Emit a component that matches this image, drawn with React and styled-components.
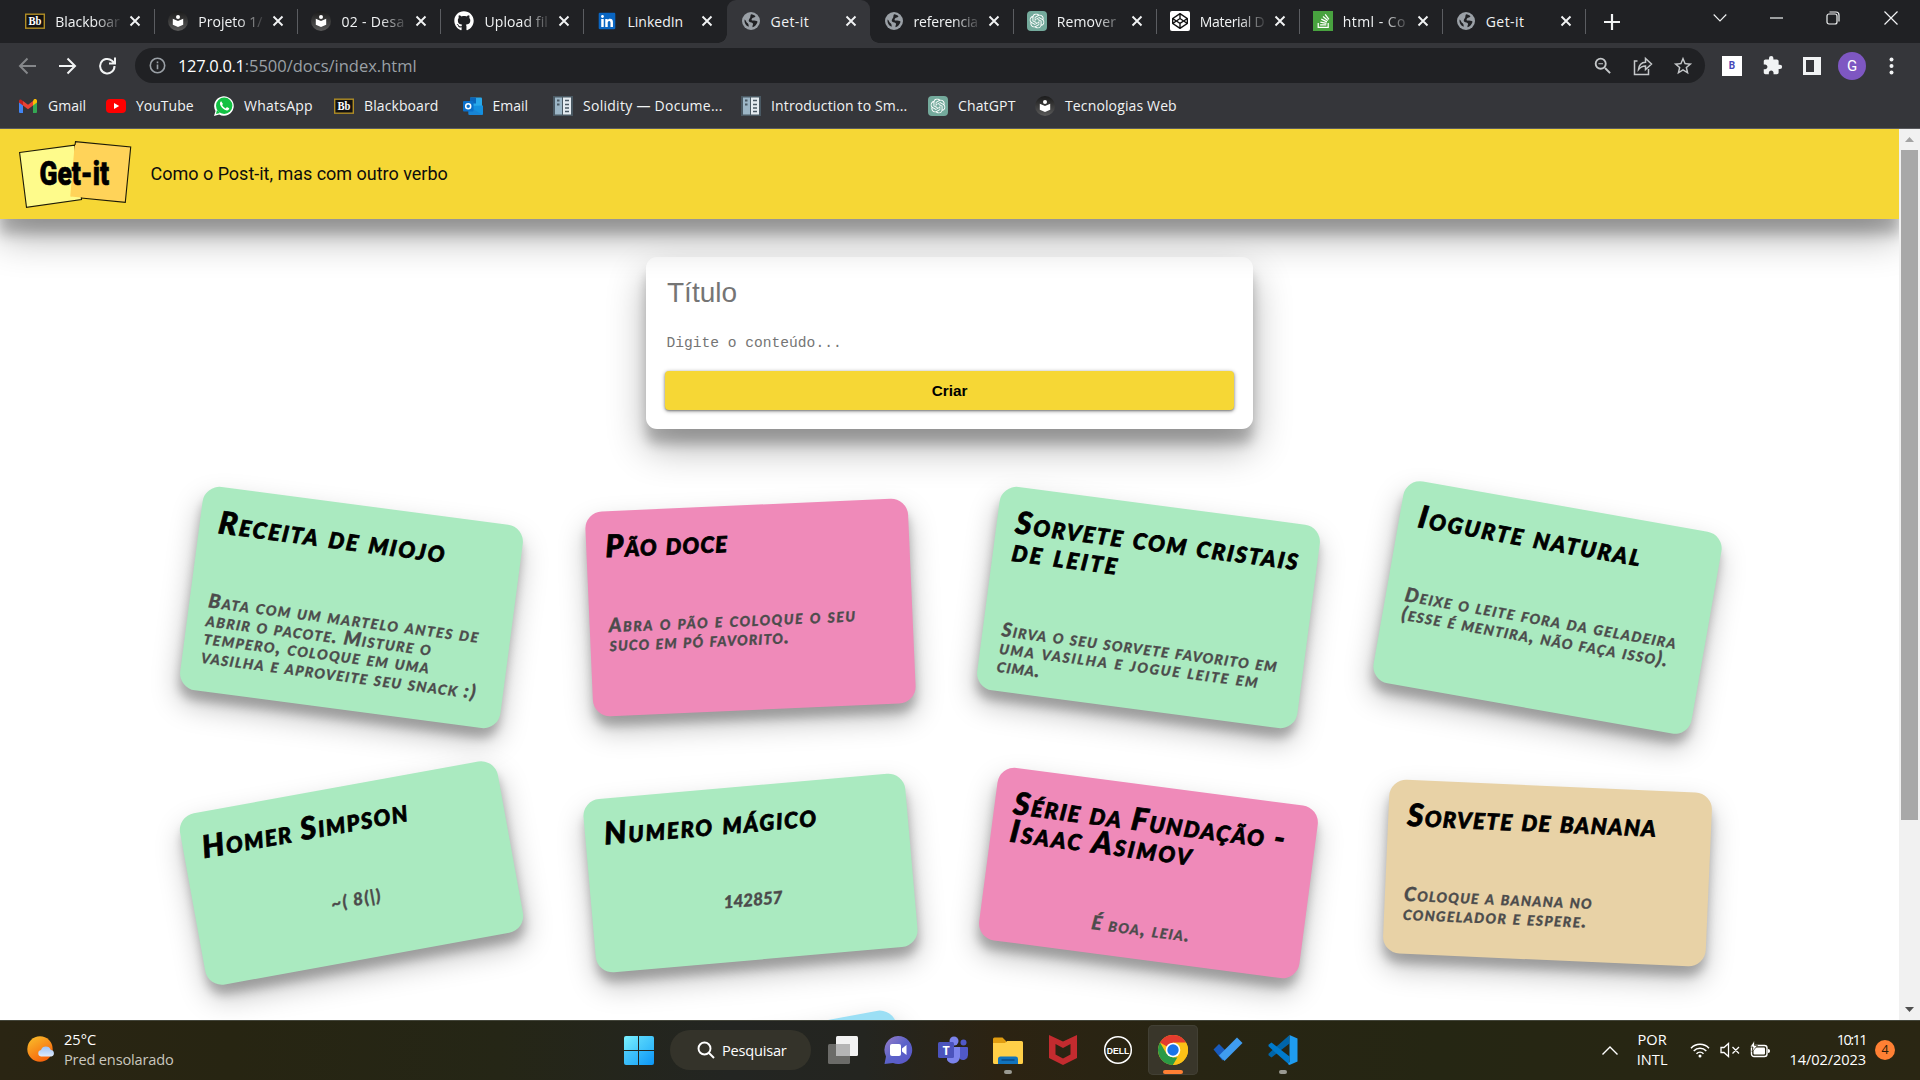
import React, { useLayoutEffect, useRef, useState } from "react";
import styled, { createGlobalStyle, css } from "styled-components";
import { FaGithub, FaLinkedin, FaStackOverflow, FaCodepen } from "react-icons/fa";
import { MdExtension, MdStarBorder, MdZoomOut } from "react-icons/md";
import { SiOpenai } from "react-icons/si";

const UI = `"Open Sans", "Noto Sans", sans-serif`;
const LIFT = "0 19px 38px rgba(0,0,0,.3), 0 15px 12px rgba(0,0,0,.22)";

const Global = createGlobalStyle`
  * { box-sizing: border-box; }
  body { margin: 0; overflow: hidden; background: #fff; }
  svg { display: block; flex: none; }
`;

/* ---------- text whose tracking is computed from a target width ---------- */
const FitSpan = styled.span`
  display: inline-block;
  white-space: nowrap;
  flex: none;
`;
function Fit({ w, children }) {
  const ref = useRef(null);
  const [track, setTrack] = useState(0);
  useLayoutEffect(() => {
    const el = ref.current;
    el.style.letterSpacing = "0px";
    const natural = el.offsetWidth;
    const step = (w - natural) / Math.max(1, String(children).length);
    el.style.letterSpacing = `${step}px`;
    setTrack(step);
  }, [w, children]);
  return (
    <FitSpan ref={ref} style={{ letterSpacing: `${track}px` }}>
      {children}
    </FitSpan>
  );
}

const Screen = styled.div`
  width: 1920px;
  height: 1080px;
  display: flex;
  flex-direction: column;
  overflow: hidden;
  font-family: ${UI};
`;

/* ---------- tab strip ---------- */
const TabStrip = styled.div`
  height: 43px;
  flex: none;
  background: #202124;
  display: flex;
  padding-left: 11.8px;
`;
const Tab = styled.div`
  width: 143.05px;
  height: 43px;
  flex: none;
  display: flex;
  align-items: center;
  padding: 0 9px 1px 13.5px;
  position: relative;
  color: #f1f3f4;
  font-size: 14px;
  ${(p) =>
    p.$active &&
    css`
      background: #35363a;
      border-radius: 9px 9px 0 0;
      &::before,
      &::after {
        content: "";
        position: absolute;
        bottom: 0;
        width: 9px;
        height: 9px;
      }
      &::before {
        left: -9px;
        background: radial-gradient(circle at 0 0, transparent 8.5px, #35363a 9px);
      }
      &::after {
        right: -9px;
        background: radial-gradient(circle at 100% 0, transparent 8.5px, #35363a 9px);
      }
    `}
`;
const TabLabel = styled.div`
  width: 66px;
  margin-left: 10px;
  white-space: nowrap;
  ${(p) => p.$fade && css`mask-image: linear-gradient(90deg, #000 60%, rgba(0, 0, 0, 0.15) 97%);`}
`;
const CloseSlot = styled.div`
  margin-left: 8px;
`;
const TabDivider = styled.i`
  width: 1px;
  height: 25px;
  flex: none;
  margin: 9px -0.5px 0;
  background: ${(p) => (p.$show ? "#5b5d61" : "transparent")};
`;
const NewTab = styled.div`
  margin: 14px 0 0 18.5px;
`;
const WindowControls = styled.div`
  margin-left: auto;
  display: flex;
  width: 214px;
  height: 36px;
  align-items: center;
`;
const ControlSlot = styled.div`
  width: ${(p) => p.$w}px;
  padding-left: ${(p) => p.$pad || 0}px;
  flex: none;
  display: flex;
  justify-content: center;
`;

/* ---------- toolbar ---------- */
const Toolbar = styled.div`
  height: 45px;
  flex: none;
  background: #35363a;
  display: flex;
  align-items: center;
  padding-left: 17px;
`;
const NavButtons = styled.div`
  display: flex;
  gap: 19px;
  width: 118px;
`;
const Omnibox = styled.div`
  width: 1570px;
  height: 35px;
  border-radius: 18px;
  background: #202124;
  display: flex;
  align-items: center;
  padding: 0 11px 0 14px;
  color: #9aa0a6;
  font-size: 16.5px;
`;
const Host = styled.span`
  color: #fff;
  margin-left: 12px;
`;
const OmniActions = styled.div`
  margin-left: auto;
  display: flex;
  gap: 19px;
  align-items: center;
`;
const Extensions = styled.div`
  display: flex;
  align-items: center;
  flex: 1;
  padding-left: 17px;
`;
const BadgeB = styled.div`
  width: 20px;
  height: 20px;
  background: #fff;
  color: #4747b8;
  font: 700 10px/20px Roboto, sans-serif;
  text-align: center;
  margin-right: 19.5px;
`;
const PanelIcon = styled.div`
  width: 18px;
  height: 18px;
  border: 3px solid #f1f3f4;
  border-right-width: 7px;
  margin: 0 17.5px 0 20px;
`;
const Avatar = styled.div`
  width: 28px;
  height: 28px;
  border-radius: 50%;
  background: #7e57c2;
  color: #fff;
  font: 400 15px/28px Roboto, sans-serif;
  text-align: center;
  margin-right: 23px;
`;

/* ---------- bookmarks ---------- */
const Bookmarks = styled.div`
  height: 41px;
  flex: none;
  background: #35363a;
  border-bottom: 1px solid #5a5b5f;
  display: flex;
  align-items: center;
  padding: 0 0 5px 18px;
  color: #f1f3f4;
  font-size: 14px;
`;
const Bookmark = styled.div`
  width: ${(p) => p.$w}px;
  flex: none;
  display: flex;
  align-items: center;
  gap: 10px;
`;

/* ---------- viewport ---------- */
const Viewport = styled.div`
  height: 891px;
  flex: none;
  display: flex;
  overflow: hidden;
`;
const Page = styled.main`
  width: 1899px;
  flex: none;
  height: 891px;
  overflow: hidden;
  background: #fff;
  display: flex;
  flex-direction: column;
  align-items: center;
`;
const AppBar = styled.header`
  width: 100%;
  height: 90px;
  flex: none;
  background: #f6d735;
  box-shadow: ${LIFT};
  display: flex;
  align-items: center;
  padding: 0 0 0 19px;
  gap: 18.5px;
  position: relative;
  z-index: 2;
  font: 400 18px/24px Roboto, sans-serif;
  color: #0d0d0d;
`;
const Form = styled.section`
  width: 607px;
  height: 172px;
  flex: none;
  margin-top: 38px;
  border-radius: 11px;
  background: #fff;
  box-shadow: ${LIFT};
  padding: 17px 19px 19px;
  display: flex;
  flex-direction: column;
  color: #757575;
`;
const TitleField = styled.div`
  font: 400 28px/38px "Liberation Sans", Arial, sans-serif;
  padding-left: 2px;
`;
const BodyField = styled.div`
  font: 400 14.6px/20px "Liberation Mono", monospace;
  padding-left: 1.5px;
  margin-top: 21px;
`;
const Create = styled.button`
  margin-top: auto;
  height: 39px;
  border: 0;
  border-radius: 4px;
  background: #f6d735;
  box-shadow: 0 1px 4px rgba(0, 0, 0, 0.4), 0 1px 2px rgba(0, 0, 0, 0.3);
  font: 700 15.3px "Liberation Sans", Arial, sans-serif;
  color: #000;
`;
const Board = styled.section`
  display: grid;
  grid-template-columns: repeat(4, 323px);
  grid-auto-rows: max-content;
  gap: 76px 75.7px;
  margin-top: 76px;
`;
const TONES = { green: "#aaeac0", pink: "#ef8ab9", sand: "#e8d2a6", blue: "#9bdff5" };
const Note = styled.article`
  height: ${(p) => p.$h}px;
  border-radius: 17px;
  background: ${(p) => TONES[p.$tone]};
  box-shadow: 0 14px 28px rgba(0, 0, 0, 0.25), 0 10px 10px rgba(0, 0, 0, 0.22);
  transform: rotate(${(p) => p.$tilt}deg);
  grid-column: ${(p) => p.$col || "auto"};
  padding: 20px 19px 0;
  font-family: Lato, "Open Sans", sans-serif;
  font-variant: small-caps;
  font-style: italic;
  display: flex;
  flex-direction: column;
  gap: 57px;
`;
const NoteTitle = styled.h3`
  margin: 0;
  font-size: 31px;
  font-weight: 900;
  line-height: 28.3px;
  color: #000;
  -webkit-text-stroke: 0.8px #000;
  display: flex;
  flex-direction: column;
  align-items: flex-start;
`;
const NoteBody = styled.div`
  font-size: 19.5px;
  font-weight: 900;
  line-height: 18.4px;
  color: #4c4c4c;
  -webkit-text-stroke: 0.3px #4c4c4c;
  display: flex;
  flex-direction: column;
  align-items: ${(p) => (p.$center ? "center" : "flex-start")};
`;
const NoteDigits = styled.span`
  font-size: 17.5px;
`;

const Scrollbar = styled.div`
  width: 21px;
  flex: none;
  background: #f1f1f1;
  display: flex;
  flex-direction: column;
  align-items: center;
`;
const ScrollArrow = styled.div`
  height: 21px;
  width: 21px;
  display: flex;
  align-items: center;
  justify-content: center;
`;
const Thumb = styled.div`
  width: 17px;
  height: 670px;
  background: #a8a8a8;
  margin-bottom: auto;
`;

/* ---------- taskbar ---------- */
const Taskbar = styled.footer`
  height: 60px;
  flex: none;
  border-top: 1px solid #43453a;
  background: linear-gradient(90deg, #2a2513 0%, #272512 12%, #252616 26%, #232522 38%, #242520 45%, #2c2312 52%, #282513 62%, #252613 75%, #2a2613 100%);
  display: flex;
  align-items: center;
  padding-bottom: 1px;
  color: #fff;
  font-size: 14.6px;
`;
const Weather = styled.div`
  width: 623.5px;
  display: flex;
  align-items: center;
  padding-left: 27px;
  gap: 8px;
`;
const TwoLine = styled.div`
  display: flex;
  flex-direction: column;
  align-items: ${(p) => p.$align || "flex-start"};
  line-height: 20px;
  padding-bottom: 2px;
`;
const Dim = styled.div`
  color: #c9c7be;
`;
const Search = styled.div`
  width: 141px;
  height: 40px;
  border-radius: 20px;
  background: #34332a;
  display: flex;
  align-items: center;
  padding-left: 27px;
  gap: 7px;
  margin: 0 4.5px 0 16.5px;
`;
const TaskButton = styled.div`
  width: 50px;
  height: 50px;
  margin: 0 2.5px;
  flex: none;
  border-radius: 5px;
  position: relative;
  display: flex;
  align-items: center;
  justify-content: center;
  ${(p) => p.$active && css`background: #39362a; box-shadow: inset 0 0 0 1px #424034;`}
  &::after {
    content: "";
    position: absolute;
    bottom: 1px;
    width: ${(p) => (p.$active ? 20 : 8)}px;
    height: 4px;
    border-radius: 2px;
    background: ${(p) => (p.$active ? "#ff8034" : p.$running ? "#9a9a92" : "transparent")};
  }
`;
const Start = styled.div`
  width: 30px;
  height: 29px;
  display: grid;
  grid-template-columns: 1fr 1fr;
  gap: 1px;
  flex: none;
  border-radius: 2px;
  overflow: hidden;
  & i:nth-child(1) { background: linear-gradient(135deg, #79f0ff, #4bcdfb); }
  & i:nth-child(2) { background: linear-gradient(135deg, #58d6fb, #30b8fa); }
  & i:nth-child(3) { background: linear-gradient(135deg, #4ccbfb, #28aff9); }
  & i:nth-child(4) { background: linear-gradient(135deg, #33b9fa, #0d96f6); }
`;
const Tray = styled.div`
  margin-left: auto;
  display: flex;
  align-items: center;
  padding-right: 25px;
`;
const TrayGap = styled.i`
  width: 18px;
`;
const TrayIcons = styled.div`
  display: flex;
  align-items: center;
  gap: 10px;
  margin: 0 20px 0 22px;
`;
const Count = styled.div`
  width: 20px;
  height: 20px;
  border-radius: 50%;
  background: #ff8034;
  color: #2a1c08;
  font-size: 12.5px;
  line-height: 20px;
  text-align: center;
  margin-left: 9px;
`;

/* ---------- icons ---------- */
const BbIcon = () => (
  <svg width="20" height="20" viewBox="0 0 20 20">
    <rect x=".7" y="3.2" width="18.6" height="14" fill="#111" stroke="#b08d25" strokeWidth="1.4" />
    <text x="3.500" y="14.200" fontSize="12" fill="#fff" fontFamily="Liberation Serif, serif" fontWeight="700" textLength="13" lengthAdjust="spacingAndGlyphs">Bb</text>
  </svg>
);
const ReaderIcon = () => (
  <svg width="20" height="20" viewBox="0 0 20 20">
    <defs>
      <linearGradient id="rd" x1="0" x2="0" y1="0" y2="1">
        <stop offset="0" stopColor="#1b1b1b" />
        <stop offset="1" stopColor="#5a5a5a" />
      </linearGradient>
    </defs>
    <circle cx="10" cy="10" r="10" fill="url(#rd)" />
    <circle cx="10" cy="6" r="2" fill="#fff" />
    <path d="M4.8 7.800 10 10l5.200-2.200v6L10 16l-5.200-2.200z" fill="#fff" />
  </svg>
);
const GlobeIcon = () => (
  <svg width="20" height="20" viewBox="0 0 20 20">
    <circle cx="10" cy="10" r="9" fill="#9aa0a6" />
    <path d="M10 3.200c2 .2 3.500 1 4.500 2-.4 1.600-2.500 1-3.500 2.200-.8 1-.4 2 .8 2.200 1.700.3 4-.3 4.800 1.200-.8 2.600-2.600 4.800-5 5.500-.6-1.300.6-2.200.4-3.500-.3-1.500-2.500-1-3.700-2C7.200 9.900 8 8.300 8.900 7c.8-1.200.2-2.500 1.100-3.800zM3.600 8.500c1.600 1 1.300 2.500 2.700 3.400.9.7 1.500 1.300 1.400 3.900C5 14.800 3 12 3.600 8.500z" fill="#202124" />
  </svg>
);
const LinkedIn = () => (
  <svg width="20" height="20" viewBox="0 0 20 20">
    <rect x="3" y="3" width="14" height="14" fill="#fff" />
    <FaLinkedin x="0.500" y="0.500" size={19} color="#0a66c2" />
  </svg>
);
const GptIcon = () => (
  <svg width="20" height="20" viewBox="0 0 20 20">
    <rect width="20" height="20" rx="4" fill="#74aa9c" />
    <SiOpenai x="2.500" y="2.500" size={15} color="#fff" />
  </svg>
);
const CodepenIcon = () => (
  <svg width="20" height="20" viewBox="0 0 20 20">
    <rect width="20" height="20" rx="2" fill="#fff" />
    <FaCodepen x="2" y="2" size={16} color="#111" />
  </svg>
);
const StackIcon = () => (
  <svg width="20" height="20" viewBox="0 0 20 20">
    <rect width="20" height="20" fill="#48a23f" />
    <FaStackOverflow x="2.500" y="2" size={16} color="#fff" />
  </svg>
);
const CloseIcon = () => (
  <svg width="12" height="12" viewBox="0 0 12 12">
    <path d="M1.500 1.500l9 9M10.500 1.500l-9 9" stroke="#f1f3f4" strokeWidth="1.900" />
  </svg>
);
const GmailIcon = () => (
  <svg width="20" height="20" viewBox="0 0 20 20">
    <path d="M1 5.500v10.500a1 1 0 0 0 1 1h3V9z" fill="#4285f4" />
    <path d="M19 5.500v10.500a1 1 0 0 1-1 1h-3V9z" fill="#34a853" />
    <path d="M15 5v4.500l4-3V5c0-2-2-2.500-3.200-1.500z" fill="#fbbc04" />
    <path d="M5 9.500V5l5 3.800L15 5v4.500l-5 3.800z" fill="#ea4335" />
    <path d="M1 5v1.500l4 3V5l-.8-.6C3 3 1 3.400 1 5z" fill="#c5221f" />
  </svg>
);
const YouTubeIcon = () => (
  <svg width="20" height="20" viewBox="0 0 20 20">
    <rect y="3" width="20" height="14" rx="4" fill="#f00" />
    <path d="M8 7v6l5.200-3z" fill="#fff" />
  </svg>
);
const WhatsIcon = () => (
  <svg width="20" height="20" viewBox="0 0 20 20">
    <path d="M0 20l1.500-5A9.800 9.800 0 1 1 5.200 18.600z" fill="#fff" />
    <circle cx="10.200" cy="9.800" r="8.200" fill="#12c143" />
    <path d="M2 18l1-4 3 3z" fill="#12c143" />
    <path d="M7.200 5.300c-1.500.8-1.700 2.700-.4 4.800 1.500 2.500 4.300 4.600 6.500 4.300 1.300-.2 2-1.200 1.900-2.100l-2.300-1.200-1.200 1.300c-1.600-.6-2.900-1.900-3.600-3.300l.9-1.100z" fill="#fff" />
  </svg>
);
const OutlookIcon = () => (
  <svg width="20" height="20" viewBox="0 0 20 20">
    <rect x="7" y="1.500" width="12" height="11" rx="1" fill="#28a8ea" />
    <rect x="7" y="1.500" width="6" height="6" fill="#0a64b8" />
    <path d="M5.500 10 20 9.500V18a1 1 0 0 1-1 1H6.500a1 1 0 0 1-1-1z" fill="#1490df" />
    <path d="M5.500 10l14 9H6.500a1 1 0 0 1-1-1z" fill="#1a7fd0" opacity=".7" />
    <rect y="5" width="10.500" height="10.500" rx="1" fill="#0a6fc9" />
    <circle cx="5.200" cy="10.200" r="2.500" fill="none" stroke="#fff" strokeWidth="1.500" />
  </svg>
);
const DocsIcon = () => (
  <svg width="20" height="20" viewBox="0 0 20 20">
    <rect width="20" height="20" fill="#4a5963" />
    <rect x="2" y="1.500" width="7" height="17" fill="#9cb6c6" />
    <path d="M4 4.500h2.500M4 8.500h2.500" stroke="#4a5963" strokeWidth="2" />
    <rect x="10" y="1.500" width="8" height="17" fill="#e4ebf0" />
    <path d="M12 4.500h4M12 8.500h4M12 12h4M12 15.500h4" stroke="#4a5963" strokeWidth="1.600" />
  </svg>
);
const Line = ({ w = 20, h = 20, d, color = "#f1f3f4", sw = 2 }) => (
  <svg width={w} height={h} viewBox={`0 0 ${w} ${h}`} fill="none" stroke={color} strokeWidth={sw}>
    <path d={d} />
  </svg>
);

const Logo = () => (
  <svg width="113" height="68" viewBox="0 0 113 68">
    <path d="M.6 12.500 55.500 5.200 62.500 59.500 7.500 67.300z" fill="#fefb8b" stroke="#1c1a08" strokeWidth="1.100" />
    <path d="M56.500 1.600 111.700 7 106.300 62.300 52 56.500z" fill="#ffd359" />
    <path d="M56 5 56.500 1.600 111.700 7 106.300 62.300 62 58" fill="none" stroke="#1c1a08" strokeWidth="1.100" />
    <path d="M56.300 6 52 56.500" stroke="#ffd359" strokeWidth="1.500" />
    <text x="20.500" y="44.500" fontSize="34" textLength="69.500" lengthAdjust="spacingAndGlyphs" fontFamily="Roboto, sans-serif" fontWeight="900" stroke="#000" strokeWidth=".7">Get-it</text>
  </svg>
);

const SunIcon = () => (
  <svg width="29" height="28" viewBox="0 0 29 28">
    <defs>
      <linearGradient id="sun" x1="0" x2=".6" y1="0" y2="1">
        <stop offset="0" stopColor="#f9c22c" />
        <stop offset="1" stopColor="#f7630c" />
      </linearGradient>
      <linearGradient id="cl" x1="0" x2="0" y1="0" y2="1">
        <stop offset="0" stopColor="#9dc3f7" />
        <stop offset="1" stopColor="#dfeafc" />
      </linearGradient>
    </defs>
    <circle cx="13" cy="13" r="12.700" fill="url(#sun)" />
    <path d="M14 20.500a3.300 3.300 0 0 1 0-6.500 5.200 5.200 0 0 1 9.800 0 3.300 3.300 0 0 1 .6 6.500z" fill="url(#cl)" />
  </svg>
);
const TaskViewIcon = () => (
  <svg width="30" height="30" viewBox="0 0 30 30">
    <rect x="8" y="1" width="22" height="20" rx="1.500" fill="#f2f2f2" />
    <rect x="0" y="9" width="22" height="20" rx="1.500" fill="#6b6b68" />
    <rect x="8" y="9" width="14" height="12" fill="#b5b5b5" />
  </svg>
);
const ChatIcon = () => (
  <svg width="30" height="30" viewBox="0 0 30 30">
    <defs>
      <linearGradient id="ch" x1="0" x2="1" y1="0" y2="1">
        <stop offset="0" stopColor="#9a7fc8" />
        <stop offset=".5" stopColor="#5b62c9" />
        <stop offset="1" stopColor="#5a55c8" />
      </linearGradient>
    </defs>
    <path d="M15 1a14 14 0 1 1-5 27l-8.500 1 1.500-7.500A14 14 0 0 1 15 1z" fill="url(#ch)" />
    <rect x="7" y="9" width="11" height="12" rx="2" fill="#fff" />
    <path d="M19 13.500 23.500 10v10L19 16.500z" fill="#fff" />
  </svg>
);
const TeamsIcon = () => (
  <svg width="30" height="30" viewBox="0 0 30 30">
    <circle cx="16" cy="6" r="4.500" fill="#7b83eb" />
    <circle cx="25.500" cy="7.500" r="3" fill="#5059c9" />
    <path d="M20 12h9a1 1 0 0 1 1 1v7a5 5 0 0 1-8 4z" fill="#5059c9" />
    <path d="M9 12h13v10a7 7 0 0 1-13 3z" fill="#7b83eb" />
    <rect x="0" y="7" width="16" height="16" rx="1.500" fill="#4b53bc" />
    <text x="8" y="19.500" fontSize="12.500" fontWeight="700" fill="#fff" textAnchor="middle" fontFamily="Open Sans, sans-serif">T</text>
  </svg>
);
const FolderIcon = () => (
  <svg width="30" height="30" viewBox="0 0 30 30">
    <path d="M0 4a1.500 1.500 0 0 1 1.500-1.500h8l3.500 3.500v5H0z" fill="#e09c10" />
    <path d="M0 8h12l2-2h14.500A1.500 1.500 0 0 1 30 7.500v20a1.500 1.500 0 0 1-1.500 1.500h-27A1.500 1.500 0 0 1 0 27.500z" fill="#ffcf48" />
    <path d="M5 29v-5a2.500 2.500 0 0 1 2.500-2.500h15A2.500 2.500 0 0 1 25 24v5z" fill="#1173bd" />
    <path d="M8.500 25h13" stroke="#0b4a86" strokeWidth="1.500" />
  </svg>
);
const McAfeeIcon = () => (
  <svg width="28" height="30" viewBox="0 0 28 30">
    <path d="M0 0l14 6.500L28 0v23l-14 7-14-7zM6.500 9v10.500l7.500 4 7.500-4V9L14 13z" fill="#c32b2f" fillRule="evenodd" />
  </svg>
);
const DellIcon = () => (
  <svg width="30" height="30" viewBox="0 0 30 30">
    <circle cx="15" cy="15" r="13.300" fill="none" stroke="#fff" strokeWidth="1.500" />
    <text x="3.800" y="18.500" fontSize="9.500" fontWeight="700" textLength="22.500" lengthAdjust="spacingAndGlyphs" fill="#fff" fontFamily="Liberation Sans, sans-serif">DELL</text>
  </svg>
);
const ChromeIcon = () => (
  <svg width="30" height="30" viewBox="0 0 30 30">
    <circle cx="15" cy="15" r="15" fill="#fbc116" />
    <path d="M15 15 2 7.500A15 15 0 0 1 28 7.500H15z" fill="#e33b2e" />
    <path d="M2 7.500 8.500 18.700 15 22.500h6.500L14.900 30A15 15 0 0 1 2 7.500z" fill="#2b9a45" />
    <path d="M14.900 30 21.500 18.700 22 11 28 7.500A15 15 0 0 1 14.900 30z" fill="#fbc116" />
    <circle cx="15" cy="15" r="7.300" fill="#fff" />
    <circle cx="15" cy="15" r="5.700" fill="#1a73e8" />
  </svg>
);
const TodoIcon = () => (
  <svg width="30" height="30" viewBox="0 0 30 30">
    <path d="M.5 14.500 6 9l9 9-5.500 7.500z" fill="#185abd" />
    <path d="M6 20.500 24 2.500l5.500 5.500L11.500 26z" fill="#3f9cf0" />
  </svg>
);
const CodeIcon = () => (
  <svg width="30" height="30" viewBox="0 0 30 30">
    <path d="M21.500 8.500 3.500 22.500.5 20.200v-1.500L21 .5z" fill="#0065a9" />
    <path d="M21.500 21.500 3.500 7.500.5 9.800v1.500L21 29.500z" fill="#007acc" />
    <path d="M21.500 0 29.500 3.500v23L21.500 30l-1.500-1 1.500-2z" fill="#1f9cf0" />
  </svg>
);
const GithubIcon = () => <FaGithub size={20} color="#fff" />;

const TABS = [
  [BbIcon, "Blackboar", true, 64.5],
  [ReaderIcon, "Projeto 1/", true, 64],
  [ReaderIcon, "02 - Desa", true, 63],
  [GithubIcon, "Upload fil", true, 64],
  [LinkedIn, "LinkedIn", false, 56],
  [GlobeIcon, "Get-it", false, 38.5],
  [GlobeIcon, "referencia", true, 64],
  [GptIcon, "Remover", true, 59],
  [CodepenIcon, "Material D", true, 65],
  [StackIcon, "html - Co", true, 63],
  [GlobeIcon, "Get-it", false, 38.5],
];

const MARKS = [
  [GmailIcon, "Gmail", 38, 88],
  [YouTubeIcon, "YouTube", 58, 108],
  [WhatsIcon, "WhatsApp", 69, 120],
  [BbIcon, "Blackboard", 74, 128.5],
  [OutlookIcon, "Email", 36, 90.5],
  [DocsIcon, "Solidity — Docume...", 139.5, 188],
  [DocsIcon, "Introduction to Sm...", 136, 187],
  [GptIcon, "ChatGPT", 58, 107],
  [ReaderIcon, "Tecnologias Web", 112, 150],
];

const NOTES = [
  { tone: "green", tilt: 7.5, h: 205, title: [["Receita de miojo", 230]], body: [["Bata com um martelo antes de", 273], ["abrir o pacote. Misture o", 228], ["tempero, coloque em uma", 229], ["vasilha e aproveite seu snack :)", 278]] },
  { tone: "pink", tilt: -2.5, h: 205, title: [["Pão doce", 123]], body: [["Abra o pão e coloque o seu", 248], ["suco em pó favorito.", 180.5]] },
  { tone: "green", tilt: 7.5, h: 205, title: [["Sorvete com cristais", 286], ["de leite", 108.5]], body: [["Sirva o seu sorvete favorito em", 278.5], ["uma vasilha e jogue leite em", 262], ["cima.", 44]] },
  { tone: "green", tilt: 10, h: 205, title: [["Iogurte natural", 227]], body: [["Deixe o leite fora da geladeira", 276], ["(esse é mentira, não faça isso).", 271]] },
  { tone: "green", tilt: -10.3, h: 173.5, center: true, digits: true, title: [["Homer Simpson", 209.5]], body: [["~( 8(|)", 51]] },
  { tone: "green", tilt: -5, h: 173.5, center: true, digits: true, title: [["Numero mágico", 214.5]], body: [["142857", 59]] },
  { tone: "pink", tilt: 7.5, h: 173.5, center: true, title: [["Série da Fundação -", 275], ["Isaac Asimov", 185.5]], body: [["É boa, leia.", 100]] },
  { tone: "sand", tilt: 2.5, h: 173.5, title: [["Sorvete de banana", 250.5]], body: [["Coloque a banana no", 189], ["congelador e espere.", 184.5]] },
  { tone: "blue", tilt: -10.6, h: 173.5, col: 2, title: [], body: [] },
];

const Lines = ({ items }) => items.map(([t, w]) => <Fit key={t} w={w}>{t}</Fit>);

export default function App() {
  return (
    <Screen>
      <Global />
      <TabStrip>
        {TABS.map(([Icon, label, fade, w], i) => (
          <React.Fragment key={i}>
            <Tab $active={i === 5}>
              <Icon />
              <TabLabel $fade={fade}><Fit w={w}>{label}</Fit></TabLabel>
              <CloseSlot><CloseIcon /></CloseSlot>
            </Tab>
            <TabDivider $show={i !== 4 && i !== 5} />
          </React.Fragment>
        ))}
        <NewTab><Line w={16} h={16} d="M8 0v16M0 8h16" sw={2.2} /></NewTab>
        <WindowControls>
          <ControlSlot $w={27}><Line w={14} h={14} d="M.7 3.500 7 10l6.300-6.500" sw={1.1} /></ControlSlot>
          <ControlSlot $w={86}><Line w={13} h={2} d="M0 1h13" sw={1.2} /></ControlSlot>
          <ControlSlot $w={28}><Line w={14} h={14} d="M1 5a2 2 0 0 1 2-2h6a2 2 0 0 1 2 2v6a2 2 0 0 1-2 2h-6a2 2 0 0 1-2-2zM3.500 1h6.500a3 3 0 0 1 3 3v6.500" sw={1.2} /></ControlSlot>
          <ControlSlot $w={73} $pad={15}><Line w={14} h={14} d="M.5.5l13 13M13.500.5l-13 13" sw={1.2} /></ControlSlot>
        </WindowControls>
      </TabStrip>

      <Toolbar>
        <NavButtons>
          <Line w={21} d="M19 10H3M10.500 2.500 3 10l7.500 7.500" color="#85878a" />
          <Line w={21} d="M2 10h16M10.500 2.500 18 10l-7.500 7.500" />
          <Line w={21} d="M17.500 10A7.200 7.200 0 1 1 15 4.700L17.500 7M18 1.500v6h-6" />
        </NavButtons>
        <Omnibox>
          <svg width="17" height="17" viewBox="0 0 17 17" fill="none" stroke="#9aa0a6" strokeWidth="1.600">
            <circle cx="8.500" cy="8.500" r="7.200" />
            <path d="M8.500 7.500v4.800M8.500 4.500v1.700" />
          </svg>
          <Host><Fit w={67}>127.0.0.1</Fit></Host>
          <Fit w={172}>:5500/docs/index.html</Fit>
          <OmniActions>
            <MdZoomOut size={22} color="#c4c7c9" />
            <Line w={20} d="M4.500 5H1.500v13.500h14V13M5.500 13.500c.5-4.500 3-7 7-7.200V2.500L18.500 8l-6 5.500V10c-3 0-5 1-7 3.500z" color="#c4c7c9" sw={1.5} />
            <MdStarBorder size={22} color="#c4c7c9" />
          </OmniActions>
        </Omnibox>
        <Extensions>
          <BadgeB>B</BadgeB>
          <MdExtension size={21} color="#f1f3f4" />
          <PanelIcon />
          <Avatar>G</Avatar>
          <svg width="5" height="18" viewBox="0 0 5 18" fill="#f1f3f4">
            <circle cx="2.500" cy="2.500" r="2" /><circle cx="2.500" cy="9" r="2" /><circle cx="2.500" cy="15.500" r="2" />
          </svg>
        </Extensions>
      </Toolbar>

      <Bookmarks>
        {MARKS.map(([Icon, label, w, slot], i) => (
          <Bookmark key={i} $w={slot}>
            <Icon />
            <Fit w={w}>{label}</Fit>
          </Bookmark>
        ))}
      </Bookmarks>

      <Viewport>
        <Page>
          <AppBar>
            <Logo />
            <Fit w={297.5}>Como o Post-it, mas com outro verbo</Fit>
          </AppBar>
          <Form>
            <TitleField>Título</TitleField>
            <BodyField>Digite o conteúdo...</BodyField>
            <Create>Criar</Create>
          </Form>
          <Board>
            {NOTES.map((n, i) => (
              <Note key={i} $tone={n.tone} $tilt={n.tilt} $h={n.h} $col={n.col}>
                <NoteTitle><Lines items={n.title} /></NoteTitle>
                <NoteBody $center={n.center}>
                  {n.digits ? <NoteDigits><Lines items={n.body} /></NoteDigits> : <Lines items={n.body} />}
                </NoteBody>
              </Note>
            ))}
          </Board>
        </Page>
        <Scrollbar>
          <ScrollArrow>
            <svg width="9" height="5" viewBox="0 0 9 5"><path d="M0 5 4.500 0 9 5z" fill="#a3a3a3" /></svg>
          </ScrollArrow>
          <Thumb />
          <ScrollArrow>
            <svg width="9" height="5" viewBox="0 0 9 5"><path d="M0 0 4.500 5 9 0z" fill="#505050" /></svg>
          </ScrollArrow>
        </Scrollbar>
      </Viewport>

      <Taskbar>
        <Weather>
          <SunIcon />
          <TwoLine>
            <Fit w={32}>25°C</Fit>
            <Dim><Fit w={109.5}>Pred ensolarado</Fit></Dim>
          </TwoLine>
        </Weather>
        <Start><i /><i /><i /><i /></Start>
        <Search>
          <svg width="18" height="18" viewBox="0 0 18 18" fill="none" stroke="#fff" strokeWidth="1.900">
            <circle cx="7.500" cy="7.500" r="6" /><path d="M12 12l5 5" />
          </svg>
          <Fit w={65}>Pesquisar</Fit>
        </Search>
        <TaskButton><TaskViewIcon /></TaskButton>
        <TaskButton><ChatIcon /></TaskButton>
        <TaskButton><TeamsIcon /></TaskButton>
        <TaskButton $running><FolderIcon /></TaskButton>
        <TaskButton><McAfeeIcon /></TaskButton>
        <TaskButton><DellIcon /></TaskButton>
        <TaskButton $active><ChromeIcon /></TaskButton>
        <TaskButton><TodoIcon /></TaskButton>
        <TaskButton $running><CodeIcon /></TaskButton>
        <Tray>
          <Line w={18} h={12} d="M1.500 10.500 9 3l7.500 7.500" color="#fff" sw={1.4} />
          <TrayGap />
          <TwoLine $align="center">
            <Fit w={29}>POR</Fit>
            <Fit w={31}>INTL</Fit>
          </TwoLine>
          <TrayIcons>
            <svg width="20" height="16" viewBox="0 0 20 16" fill="none" stroke="#fff" strokeWidth="1.500">
              <path d="M1 6.200a12.500 12.500 0 0 1 18 0M3.700 9a8.800 8.800 0 0 1 12.600 0M6.500 11.700a5 5 0 0 1 7 0" />
              <circle cx="10" cy="14" r="1.500" fill="#fff" stroke="none" />
            </svg>
            <svg width="20" height="16" viewBox="0 0 20 16" fill="none" stroke="#fff" strokeWidth="1.300">
              <path d="M1 5.500h3L8.500 1.500v13L4 10.500H1zM12.500 5l6.500 6.500M19 5l-6.500 6.500" />
            </svg>
            <svg width="20" height="18" viewBox="0 0 20 18">
              <rect x="1.500" y="4.500" width="15.500" height="11" rx="2.500" fill="none" stroke="#fff" strokeWidth="1.400" />
              <rect x="3.500" y="6.500" width="11.500" height="7" rx="1" fill="#fff" />
              <path d="M18 8v4c1.500 0 2-.8 2-2s-.5-2-2-2z" fill="#fff" />
              <path d="M4.500-.5 0 6h3l-1 5 5.500-6.500H4.500z" fill="#fff" stroke="#28250f" strokeWidth=".7" />
            </svg>
          </TrayIcons>
          <TwoLine $align="flex-end">
            <Fit w={29}>10:11</Fit>
            <Fit w={76}>14/02/2023</Fit>
          </TwoLine>
          <Count>4</Count>
        </Tray>
      </Taskbar>
    </Screen>
  );
}
